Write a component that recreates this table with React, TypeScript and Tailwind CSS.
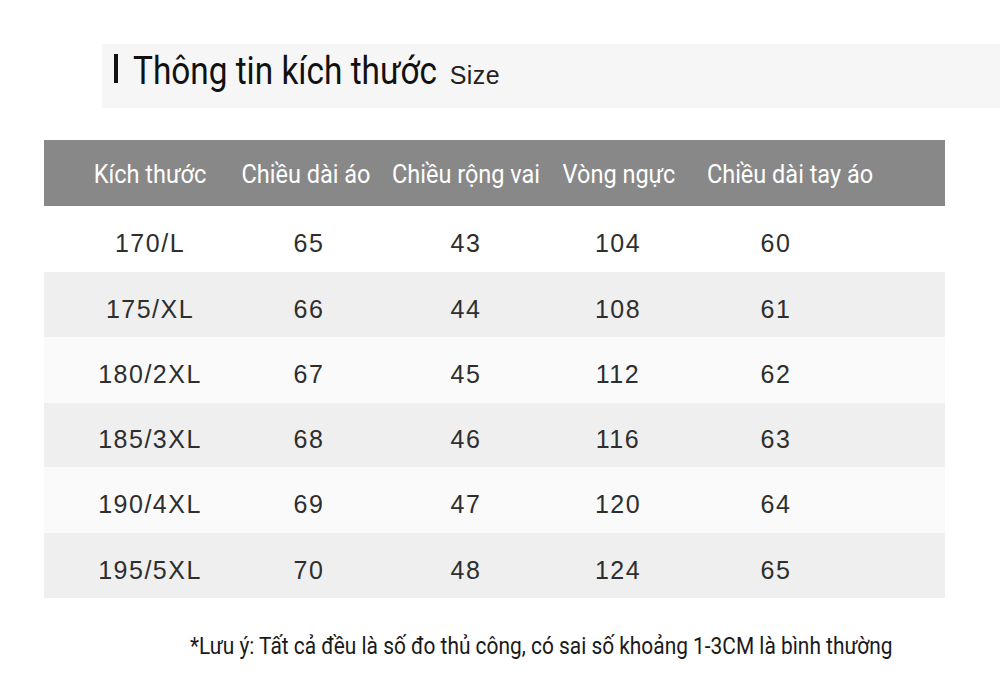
import React from "react";

const rows = [
  ["170/L", "65", "43", "104", "60"],
  ["175/XL", "66", "44", "108", "61"],
  ["180/2XL", "67", "45", "112", "62"],
  ["185/3XL", "68", "46", "116", "63"],
  ["190/4XL", "69", "47", "120", "64"],
  ["195/5XL", "70", "48", "124", "65"],
];

const rowBg = ["bg-white", "bg-[#efefef]", "bg-[#fafafa]", "bg-[#efefef]", "bg-[#fafafa]", "bg-[#efefef]"];
const rowH = ["h-[66px]", "h-[65px]", "h-[66px]", "h-[64px]", "h-[66px]", "h-[65px]"];

export default function App() {
  return (
    <div className="w-[1000px] h-[679px] bg-white overflow-hidden" style={{ fontFamily: "Roboto, 'Liberation Sans', sans-serif" }}>
      <div className="pt-[44px] pl-[102px]">
        <div className="h-[64px] bg-[#f6f6f6] flex items-start pl-[12px] pt-[10px]">
          <div className="w-[4px] h-[29px] bg-[#111] mt-[0px]" />
          <div className="ml-[15px] flex items-baseline whitespace-nowrap mt-[-2px]">
            <div className="text-[39px] leading-none text-[#111] origin-left scale-x-[0.855]">
              Thông tin kích thước
            </div>
            <div
              className="ml-[-39px] text-[25px] leading-none text-[#222] tracking-[0.5px]"
              style={{ fontFamily: "'Liberation Sans', Arial, sans-serif" }}
            >
              Size
            </div>
          </div>
        </div>
      </div>

      <div className="mt-[32px] ml-[44px] w-[901px]">
        <div className="h-[66px] bg-[#888888] flex items-center pt-[4px] text-white text-[25px] whitespace-nowrap">
          <div className="ml-[31px] w-[150px] flex justify-center scale-x-[0.94]">Kích thước</div>
          <div className="ml-[6px] w-[150px] flex justify-center scale-x-[0.94]">Chiều dài áo</div>
          <div className="ml-[10px] w-[150px] flex justify-center scale-x-[0.94]">Chiều rộng vai</div>
          <div className="ml-[3px] w-[150px] flex justify-center scale-x-[0.94]">Vòng ngực</div>
          <div className="ml-[21px] w-[150px] flex justify-center scale-x-[0.94]">Chiều dài tay áo</div>
        </div>
        {rows.map((r, i) => (
          <div
            key={i}
            className={`${rowBg[i]} ${rowH[i]} flex items-center pt-[10px] text-[25px] text-[#2e2e2e] whitespace-nowrap tracking-[1.5px]`}
            style={{ fontFamily: "'Liberation Sans', Arial, sans-serif" }}
          >
            <div className="ml-[31px] w-[150px] flex justify-center">{r[0]}</div>
            <div className="ml-[9px] w-[150px] flex justify-center">{r[1]}</div>
            <div className="ml-[7px] w-[150px] flex justify-center">{r[2]}</div>
            <div className="ml-[2px] w-[150px] flex justify-center">{r[3]}</div>
            <div className="ml-[8px] w-[150px] flex justify-center">{r[4]}</div>
          </div>
        ))}
      </div>

      <div className="mt-[32px] ml-[190px] text-[23px] text-[#1a1a1a] whitespace-nowrap origin-left scale-x-[0.908]">
        *Lưu ý: Tất cả đều là số đo thủ công, có sai số khoảng 1-3CM là bình thường
      </div>
    </div>
  );
}
